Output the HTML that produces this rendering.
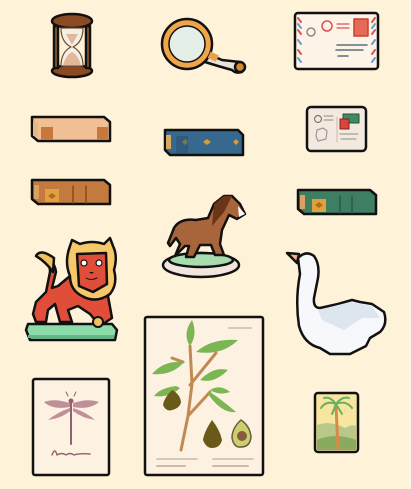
<!DOCTYPE html>
<html><head><meta charset="utf-8">
<style>
html,body{margin:0;padding:0;background:#fef2d8;width:411px;height:489px;overflow:hidden}
svg{display:block}
</style></head><body>
<svg width="411" height="489" viewBox="0 0 411 489" xmlns="http://www.w3.org/2000/svg" stroke-linejoin="round" stroke-linecap="round">
<rect width="411" height="489" fill="#fef2d8"/>
<rect x="409" width="2" height="489" fill="#fbf6ee"/>

<!-- Hourglass -->
<g stroke="#111" stroke-width="2.5">
<ellipse cx="72" cy="21" rx="20" ry="7" fill="#8a4a22"/>
<ellipse cx="72" cy="71" rx="20" ry="6" fill="#8a4a22"/>
<rect x="54" y="26" width="4" height="42" fill="#a0602c"/>
<rect x="86" y="26" width="4" height="42" fill="#a0602c"/>
<path d="M61 28 L83 28 Q83 42 73 47 Q83 52 83 66 L61 66 Q61 52 71 47 Q61 42 61 28Z" fill="#f6efe6" stroke-width="1.2" stroke="#6a4a30"/>
</g>
<path d="M66 34 L78 34 L72 45Z M63 65 Q66 55 72 52 Q78 55 81 65Z" fill="#e2b89a"/>

<!-- Magnifier -->
<g stroke="#111" stroke-width="2.5">
<path d="M208 54 L222 60 L240 62 Q248 66 242 72 Q236 74 232 70 L218 66 L205 62Z" fill="#e9e2da"/>
<circle cx="240" cy="67" r="5" fill="#d48a30"/>
<circle cx="187" cy="44" r="25" fill="#f0a548"/>
<circle cx="187" cy="44" r="18" fill="#e4efe8" stroke-width="1.5"/>
</g>
<rect x="209" y="53" width="9" height="7" fill="#e8a04a" transform="rotate(25 213 56)"/>

<!-- Envelope -->
<rect x="295" y="13" width="83" height="56" rx="3" fill="#fdf3e6" stroke="#111" stroke-width="2.5"/>
<g stroke="#d9535a" stroke-width="2"><path d="M298 18l3 4M298 30l3 4M375 18l-3 4M375 30l-3 4M298 50l3 4M375 50l-3 4"/></g>
<g stroke="#6a9ad0" stroke-width="2"><path d="M298 24l3 4M298 40l3 4M375 24l-3 4M375 40l-3 4M298 58l3 4M375 58l-3 4"/></g>
<rect x="354" y="19" width="14" height="17" fill="#e66a58" stroke="#c8402e" stroke-width="1.5"/>
<circle cx="327" cy="26" r="5" fill="none" stroke="#e05050" stroke-width="1.5"/>
<circle cx="311" cy="32" r="4" fill="none" stroke="#8a8a8a" stroke-width="1.5"/>
<path d="M337 24h12M337 28h12" stroke="#e05050" stroke-width="1.2"/>
<path d="M337 45h30M336 50h27M338 56h10" stroke="#5a7080" stroke-width="1.6"/>

<!-- Tan book -->
<g stroke="#111" stroke-width="2.5">
<path d="M32 117 L104 117 L110 122 L110 141 L38 141 L32 136Z" fill="#f0c094"/>
</g>
<rect x="41" y="127" width="12" height="13" fill="#c8783e"/>
<rect x="97" y="127" width="11" height="13" fill="#c8783e"/>
<rect x="33" y="122" width="5" height="14" fill="#e8b880"/>

<!-- Blue book -->
<g stroke="#111" stroke-width="2.5">
<path d="M165 130 L238 130 L243 135 L243 155 L170 155 L165 150Z" fill="#37688e"/>
</g>
<rect x="166" y="135" width="5" height="14" fill="#d8a860"/>
<path d="M182 142l3-3 3 3-3 3z M203 142l4-3 4 3-4 3z M233 142l3-3 3 3-3 3z" fill="#d89a3a"/>
<rect x="176" y="136" width="12" height="18" fill="#2a4e6c" opacity=".5"/>

<!-- Postcard -->
<rect x="307" y="107" width="59" height="44" rx="4" fill="#f3e9df" stroke="#111" stroke-width="2.5"/>
<rect x="343" y="114" width="16" height="9" fill="#3e8a62" stroke="#245040" stroke-width="1"/>
<rect x="340" y="119" width="9" height="10" fill="#d8453c" stroke="#8a2020" stroke-width="1"/>
<circle cx="318" cy="119" r="3.5" fill="none" stroke="#7a7a7a" stroke-width="1.2"/>
<path d="M324 116h9M324 120h9M340 134h18M341 139h15" stroke="#8a8a8a" stroke-width="1"/>
<path d="M317 130 l6 -2 4 3 -1 8 -8 2 -2-5z" fill="none" stroke="#9a9a9a" stroke-width="1.2"/>
<path d="M337 117v25" stroke="#c8b8a8" stroke-width="1"/>

<!-- Brown book -->
<g stroke="#111" stroke-width="2.5">
<path d="M32 180 L104 180 L110 185 L110 204 L38 204 L32 199Z" fill="#c47a3e"/>
</g>
<rect x="34" y="185" width="5" height="14" fill="#dca060"/>
<rect x="45" y="189" width="14" height="13" fill="#e0a040"/>
<path d="M52 193l4 3-4 3-4-3z" fill="#b06a20"/>
<path d="M73 186v17M86 186v17" stroke="#8a4a20" stroke-width="1.5"/>

<!-- Green book -->
<g stroke="#111" stroke-width="2.5">
<path d="M298 190 L370 190 L376 195 L376 214 L304 214 L298 209Z" fill="#3e7e62"/>
</g>
<rect x="300" y="195" width="5" height="14" fill="#dca060"/>
<rect x="312" y="199" width="14" height="13" fill="#e0a040"/>
<path d="M319 202l4 3-4 3-4-3z" fill="#b06a20"/>
<path d="M340 196v17M352 196v17" stroke="#2a5a44" stroke-width="1.5"/>

<!-- Horse -->
<g stroke="#111" stroke-width="2.5">
<ellipse cx="201" cy="265" rx="38" ry="12" fill="#f0e6de"/>
<ellipse cx="201" cy="260" rx="32" ry="7" fill="#a8dcae"/>
<path d="M175 256 L180 244 L176 238 L170 246 L168 243 L174 228 Q180 218 196 220 L208 218 L214 204 L224 196 L232 196 L240 204 L245 214 L237 219 L229 215 L222 230 L220 244 L224 255 L215 255 L211 245 L200 245 L194 257 L186 257 L189 246 L185 246 Z" fill="#a8643a"/>
</g>
<path d="M214 204 L224 196 L232 196 L224 212 L212 226Z" fill="#6a3418"/>
<path d="M238 206 L245 214 L239 217Z" fill="#fff"/>

<!-- Lion -->
<g stroke="#111" stroke-width="2.5">
<path d="M28 324 L112 324 L117 330 L115 340 L30 340 L26 330Z" fill="#8cdcaa"/>
<path d="M42 258 Q50 262 50 272 L46 292 L36 302 L33 314 L36 322 L46 322 L48 310 L55 304 L60 322 L72 322 L68 310 L78 306 L90 314 L100 326 L112 318 L108 296 L112 284 L104 276 L70 276 L58 286 L52 288 L56 272 Q54 258 42 258Z" fill="#e04e3a"/>
<path d="M36 256 Q40 248 54 258 L53 272 Q46 262 36 256Z" fill="#f3c060"/>
<path d="M70 246 L72 240 L80 244 Q92 240 104 244 L110 238 L113 246 Q118 256 114 270 Q118 284 110 294 Q96 304 82 296 Q70 290 70 276 Q64 262 70 246Z" fill="#f6c86a"/>
<path d="M77 254 L106 253 L107 284 L93 292 L79 286 Z" fill="#e04e3a"/>
<circle cx="98" cy="322" r="5" fill="#f3c060" stroke-width="2"/>
</g>
<circle cx="84" cy="263" r="3" fill="#fff" stroke="#111" stroke-width="1.2"/>
<circle cx="99" cy="263" r="3" fill="#fff" stroke="#111" stroke-width="1.2"/>
<path d="M89 272h5l-2.5 2z" fill="#111"/>
<path d="M86 278q5 3 11 0" stroke="#111" stroke-width="1" fill="none"/>
<rect x="28" y="335" width="86" height="3" fill="#5cbc88"/>

<!-- Swan -->
<g stroke="#111" stroke-width="2.5">
<path d="M298 258 Q306 250 314 256 Q320 264 318 278 L314 298 Q313 308 320 308 L338 304 L352 300 L360 302 L372 304 L384 312 Q388 324 380 332 L370 338 L366 346 L350 354 L330 354 L320 348 Q304 344 299 326 Q295 300 300 274 Z" fill="#f6f8fb"/>
<path d="M287 253 L299 254 L297 263 Z" fill="#f0b088"/>
</g>
<path d="M318 310 L350 302 L372 306 L380 318 L362 318 L344 330 L322 320Z" fill="#dde5ee"/>

<!-- Avocado print -->
<rect x="145" y="317" width="118" height="158" rx="2" fill="#fdf1e2" stroke="#111" stroke-width="2.5"/>
<path d="M229 328h22M157 459h40M213 459h40" stroke="#cbb8aa" stroke-width="1.6"/>
<path d="M157 466h28M213 466h35" stroke="#cbb8aa" stroke-width="2"/>
<path d="M181 450 L188 416 L192 384 L190 346 M190 385 L216 353 M188 416 L210 392 M183 362 L172 358" stroke="#c08a52" stroke-width="3" fill="none"/>
<g fill="#7cb654">
<path d="M190 346 Q182 334 192 320 Q198 334 190 346Z"/>
<path d="M196 352 Q212 338 238 340 Q222 356 196 352Z"/>
<path d="M184 362 Q164 360 152 374 Q172 376 184 362Z"/>
<path d="M200 380 Q214 366 228 370 Q214 384 200 380Z"/>
<path d="M176 386 Q160 388 154 396 Q170 398 180 388Z"/>
<path d="M210 392 Q222 400 236 412 Q222 414 208 394Z"/>
<path d="M210 390 Q220 384 230 392 Q220 396 210 390Z"/>
</g>
<path d="M172 390 Q164 398 163 405 Q166 412 172 410 Q180 408 181 402 Q180 394 172 390Z" fill="#6a5a1a"/>
<path d="M212 420 Q204 432 203 440 Q206 448 212 448 Q220 448 222 440 Q220 430 212 420Z" fill="#6a5a1a"/>
<path d="M241 420 Q232 428 232 438 Q234 448 241 447 Q250 447 251 437 Q250 426 241 420Z" fill="#c8d070" stroke="#6a5a3a" stroke-width="1.5"/>
<circle cx="242" cy="436" r="5" fill="#8a5a3a"/>

<!-- Dragonfly print -->
<rect x="33" y="379" width="76" height="96" rx="2" fill="#fdf1e2" stroke="#111" stroke-width="2.5"/>
<path d="M71 402v42" stroke="#946070" stroke-width="2"/>
<g fill="#c09098">
<path d="M70 403 Q54 398 44 402 Q52 410 70 407Z"/>
<path d="M73 403 Q88 398 99 402 Q90 410 73 407Z"/>
<path d="M70 408 Q58 412 48 420 Q62 418 70 411Z"/>
<path d="M73 408 Q86 412 95 420 Q82 418 73 411Z"/>
</g>
<circle cx="71" cy="401" r="2.5" fill="#946070"/>
<path d="M68 396l-2-4M74 396l2-4" stroke="#946070" stroke-width="1"/>
<path d="M52 455 Q55 447 57 455 Q62 452 66 455 Q70 452 74 455 Q79 453 90 454" stroke="#946070" stroke-width="1.4" fill="none"/>

<!-- Palm -->
<rect x="315" y="393" width="43" height="59" rx="3" fill="#f8e6a0" stroke="#111" stroke-width="2.5"/>
<path d="M317 425 Q330 420 345 428 Q352 424 356 426 L356 450 L317 450Z" fill="#b8c888"/>
<path d="M317 440 Q335 432 356 440 L356 450 L317 450Z" fill="#8aaa60"/>
<path d="M336 406 L338 448" stroke="#d88a48" stroke-width="3"/>
<g stroke="#6ab060" stroke-width="2" fill="none">
<path d="M336 404 Q326 400 321 408M336 404 Q346 400 352 408M336 404 Q330 396 324 398M336 404 Q342 396 349 398M336 404 L332 414M336 404 L342 414"/>
</g>
</svg>
</body></html>
